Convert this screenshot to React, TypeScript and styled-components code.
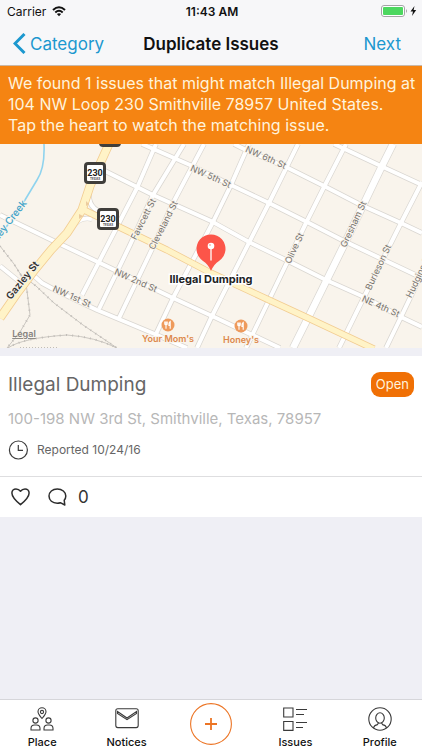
import React from "react";
import styled, { createGlobalStyle } from "styled-components";

const GlobalStyle = createGlobalStyle`
  * { box-sizing: border-box; }
  body { margin: 0; background: #efeff5; font-family: Inter, "Liberation Sans", sans-serif; color: #111; }
  button { font: inherit; border: 0; padding: 0; background: none; color: inherit; cursor: pointer; }
  h1, h2, p { margin: 0; }
  svg { display: block; }
`;

const Screen = styled.div`
  min-height: 100vh;
  display: flex;
  flex-direction: column;
`;

const Header = styled.header`
  background: #f7f7f9;
  border-bottom: 1px solid #c9b8a8;
`;

const StatusBar = styled.div`
  display: grid;
  grid-template-columns: 1fr auto 1fr;
  align-items: center;
  height: 22px;
  padding: 0 5px 0 7px;
  font-size: 12px;
`;

const StatusGroup = styled.div<{ $end?: boolean }>`
  display: flex;
  align-items: center;
  gap: 6px;
  justify-content: ${(p) => (p.$end ? "flex-end" : "flex-start")};
`;

const Clock = styled.span`
  font-size: 12px;
  font-weight: 600;
`;

const NavBar = styled.nav`
  display: grid;
  grid-template-columns: 1fr auto 1fr;
  align-items: center;
  height: 43px;
  padding: 0 13px;
`;

const Title = styled.h1`
  font-size: 17px;
  font-weight: 600;
  line-height: 24px;
`;

const NavLink = styled.a<{ $end?: boolean }>`
  display: flex;
  align-items: center;
  gap: 4px;
  justify-self: ${(p) => (p.$end ? "end" : "start")};
  padding-right: ${(p) => (p.$end ? 8 : 0)}px;
  color: #1c98cf;
  font-size: 17px;
  line-height: 24px;
  text-decoration: none;
`;

const Banner = styled.p`
  padding: 7px 0 8px 8px;
  background: #f58412;
  color: #fff3dc;
  font-size: 16px;
  line-height: 21px;
`;

const MapArea = styled.div`
  height: 204px;
  background: #f9f4ec;
  svg { width: 100%; height: 100%; }
`;

const Card = styled.article`
  margin-top: 8px;
  background: #fff;
`;

const CardBody = styled.div`
  padding: 16px 8px;
  border-bottom: 1px solid #dedee0;
`;

const CardHeading = styled.div`
  display: flex;
  align-items: center;
  justify-content: space-between;
`;

const IssueTitle = styled.h2`
  font-size: 19px;
  font-weight: 400;
  line-height: 25px;
  color: #666;
`;

const Badge = styled.span`
  padding: 0 5px;
  border-radius: 9px;
  background: #f07005;
  color: #fff3dc;
  font-size: 13px;
  line-height: 25px;
`;

const Address = styled.p`
  margin-top: 12px;
  font-size: 15px;
  line-height: 20px;
  color: #b7b7b7;
`;

const Reported = styled.p`
  display: flex;
  align-items: center;
  gap: 9px;
  margin-top: 11px;
  font-size: 12px;
  line-height: 20px;
  color: #666;
`;

const Actions = styled.div`
  display: flex;
  align-items: center;
  height: 40px;
  padding: 0 11px;
  gap: 18px;
`;

const Action = styled.button`
  display: flex;
  align-items: center;
  gap: 11px;
  font-size: 17px;
  color: #333;
`;

const TabBar = styled.nav`
  display: grid;
  grid-template-columns: repeat(5, 1fr);
  margin-top: auto;
  height: 51px;
  background: #fff;
  border-top: 1px solid #d6d6da;
`;

const Tab = styled.button`
  display: flex;
  flex-direction: column;
  align-items: center;
  justify-content: flex-end;
  gap: 4px;
  padding-bottom: 1px;
  font-size: 11px;
  font-weight: 500;
  line-height: 14px;
`;

const AddTab = styled.button`
  display: flex;
  align-items: flex-start;
  justify-content: center;
  padding-top: 3px;
`;

const roads = [
  "M234 0L246 6L288 24L326 43L361 61L401 79L422 89",
  "M142 0L190 21L231 41L269 59L307 78L344 97L422 134",
  "M105 27L153 51L211 77L249 98L288 117L326 136L364 153L401 173L422 183",
  "M0 71L60 100L100 119L173 154L212 172L280 204",
  "M0 122L21 139M33 131L42 139L55 146L97 166L157 191L187 204",
  "M334 0L383 23L422 41",
  "M156 0L137 44L103 110L82 151",
  "M184 0L153 51L130 101L99 165",
  "M204 0L173 59L153 103L119 174",
  "M249 0L231 41L213 78L173 154L156 190",
  "M298 0L269 59L211 174L197 204",
  "M346 0L324 43L306 79L269 156L246 204",
  "M422 38L401 79L364 153L339 204",
  "M422 129L401 173L386 204",
  "M90 40Q85 63 101 68M72 84Q79 72 92 75",
];
const avenue = "M393 0L381 24L344 101L308 174L293 204";
const highway = "M109 0L90 42L82 66L67 89L51 106L33 128L18 148L0 174";
const thirdStreet = "M82 65L117 82L167 106L211 129L269 156L308 174L374 205";
const rails = [
  "M0 102L14 120L26 139L30 171L20 188L7 204",
  "M20 130L36 142L54 159L83 181L117 204",
  "M8 204Q22 194 67 191Q95 193 117 204",
];

type Label = [string, number, number, number];
const streetLabels: Label[] = [
  ["NW 6th St", 266, 13, 24],
  ["NW 5th St", 211, 32, 24],
  ["Fawcett St", 143, 75, -63],
  ["Cleveland St", 163, 81, -63],
  ["Olive St", 294, 104, -65],
  ["Gresham St", 353, 80, -65],
  ["Burleson St", 378, 123, -65],
  ["Hudgins St", 418, 132, -65],
  ["NW 1st St", 72, 152, 24],
  ["NW 2nd St", 136, 136, 24],
  ["NE 4th St", 381, 162, 24],
];

const Shield = ({ x, y, route }: { x: number; y: number; route?: string }) => (
  <g transform={`translate(${x} ${y})`}>
    <rect x="-9.5" y="-9.5" width="19" height="19" rx="2.5" fill="#fff" stroke="#403e3b" strokeWidth="3" />
    {route && (
      <>
        <text y="2.5" textAnchor="middle" fontSize="9" fontWeight="700" fontFamily="Roboto, sans-serif" fill="#222">{route}</text>
        <text y="7" textAnchor="middle" fontSize="3" fontWeight="700" fill="#444">TEXAS</text>
      </>
    )}
  </g>
);

const Restaurant = ({ x, y, name }: { x: number; y: number; name: string }) => (
  <g transform={`translate(${x} ${y})`}>
    <circle r="6.5" fill="#ee9a5c" />
    <path d="M-3.2-3.5v2.3q0 1.2 1.2 1.2t1.2-1.2v-2.3M-2-3.5v7.2M2.2 3.7v-7.2Q.6-2.4.9.4h1.3" fill="none" stroke="#fff" strokeWidth="1.1" />
    <text y="17" textAnchor="middle" fontSize="9" fontWeight="600" fill="#dd884b" stroke="#f9f4ec" strokeWidth="2" paintOrder="stroke">{name}</text>
  </g>
);

const StreetMap = () => (
  <svg viewBox="0 0 422 204" preserveAspectRatio="xMidYMid slice" role="img" aria-label="Map of Smithville">
    <g fill="none" strokeLinejoin="round">
      {rails.map((d) => <path key={d} d={d} stroke="#cbc7c1" strokeWidth="1" />)}
      {rails.map((d) => <path key={d + "ties"} d={d} stroke="#c1bdb8" strokeWidth="2" strokeDasharray="1 5" />)}
      <path d="M20 203.5H57" stroke="#c1bdb8" strokeDasharray="1 2" />
      <path d="M44 0Q45 24 37 36L25 56L0 92" stroke="#8fd3ee" strokeWidth="1.6" />
      {roads.map((d) => <path key={d} d={d} stroke="#d9d6d1" strokeWidth="5.4" />)}
      <path d={avenue} stroke="#d9d6d1" strokeWidth="8" />
      {roads.map((d) => <path key={d + "fill"} d={d} stroke="#fff" strokeWidth="4" />)}
      <path d={avenue} stroke="#fff" strokeWidth="6.6" />
      <path d={thirdStreet} stroke="#f2cc91" strokeWidth="7" />
      <path d={highway} stroke="#f2cc91" strokeWidth="9" />
      <path d={thirdStreet} stroke="#fff3c7" strokeWidth="5.4" />
      <path d={highway} stroke="#fff3c7" strokeWidth="7.4" />
      <path d="M86 57v5l3-2zM79 70v5l4-3z" fill="#eccb9e" />
    </g>
    <g fontSize="9" fill="#77736f" stroke="#f9f4ec" strokeWidth="2" paintOrder="stroke" textAnchor="middle" dominantBaseline="central">
      {streetLabels.map(([text, x, y, angle]) => (
        <text key={text} transform={`translate(${x} ${y}) rotate(${angle})`}>{text}</text>
      ))}
      <text transform="translate(24 57) rotate(-52)" textAnchor="end" fontSize="10" fontWeight="500" fill="#3fa3c9">Gazley Creek</text>
      <text transform="translate(22 136) rotate(-51)" fontSize="10" fontWeight="600" fill="#333">Gazley St</text>
    </g>
    <Shield x={110} y={-8} />
    <Shield x={95} y={29} route="230" />
    <Shield x={108} y={75} route="230" />
    <Restaurant x={168} y={181} name="Your Mom's" />
    <Restaurant x={241} y={182} name="Honey's" />
    <text x="24" y="193" textAnchor="middle" fontSize="9" fontWeight="600" fill="#85827e" textDecoration="underline">Legal</text>
    <path d="M211 127Q208 120 203 117A14.5 14.5 0 1 1 219 117Q214 120 211 127Z" fill="#fc5549" />
    <path d="M211 103V116" stroke="#fff" strokeWidth="1.3" strokeLinecap="round" />
    <circle cx="211" cy="102" r="3.3" fill="#fff" />
    <circle cx="210" cy="101" r="1" fill="#fcb5ae" />
    <text x="211" y="139" textAnchor="middle" fontSize="11" fontWeight="700" fill="#222" stroke="#fff" strokeWidth="3" paintOrder="stroke">Illegal Dumping</text>
  </svg>
);

const WifiIcon = () => (
  <svg width="14" height="11" viewBox="0 0 14 11" fill="none" stroke="#111" strokeWidth="2">
    <path d="M1 4.1Q7-1.5 13 4.1M3.3 6.5Q7 3.1 10.7 6.5" />
    <path d="M4.9 8.1Q7 6.4 9.1 8.1L7 10.3Z" fill="#111" stroke="none" />
  </svg>
);
const BatteryIcon = () => (
  <svg width="36" height="12" viewBox="0 0 36 12">
    <rect x=".5" y=".5" width="23" height="11" rx="2.5" fill="#fff" stroke="#a4a4a6" />
    <rect x="2" y="2" width="20" height="8" rx="1" fill="#4cd75f" />
    <path d="M25 4q2 2 0 4z" fill="#a4a4a6" />
    <path d="M33.5 1L29.5 6.6H32L31 11L35.2 5.1H32.6Z" fill="#111" />
  </svg>
);
const BackIcon = () => (
  <svg width="13" height="21" viewBox="0 0 13 21" fill="none" stroke="#1c98cf" strokeWidth="3">
    <path d="M11.5 1L2 10.5L11.5 20" />
  </svg>
);
const ClockIcon = () => (
  <svg width="20" height="20" viewBox="0 0 20 20" fill="none" stroke="#3c3c3c" strokeWidth="1.2">
    <circle cx="10.4" cy="10" r="9" />
    <path d="M10.3 5V10.3H15" />
  </svg>
);
const HeartIcon = () => (
  <svg width="19" height="18" viewBox="0 0 19 18" fill="none" stroke="#2d2d2d" strokeWidth="1.5" strokeLinejoin="round">
    <path d="M9.5 3.2C8 1.2 6.3.9 5 .9C2.7.9.9 2.7.9 5C.9 9 4.5 12.6 9.5 16.7C14.5 12.6 18.1 9 18.1 5C18.1 2.7 16.3.9 14 .9C12.7.9 11 1.2 9.5 3.2Z" />
  </svg>
);
const CommentIcon = () => (
  <svg width="19" height="18" viewBox="0 0 19 18" fill="none" stroke="#2d2d2d" strokeWidth="1.5" strokeLinejoin="round">
    <path d="M12.3 14.7Q11 15.2 9.2 15.2C4.5 15.2 1 12.3 1 8.1S4.5 1 9.3 1S17.8 4.1 17.8 8Q17.8 10.4 16.2 12.2L16.8 17Z" />
  </svg>
);
const iconProps = { width: 24, height: 24, viewBox: "0 0 24 24", fill: "none", stroke: "#3a3a3a", strokeWidth: 1.1 };
const PlaceIcon = () => (
  <svg {...iconProps}>
    <path d="M12 11.5Q8 7 8 4.8A4 4 0 0 1 16 4.8Q16 7 12 11.5Z" />
    <circle cx="12" cy="5" r="1.6" />
    <circle cx="5.5" cy="13.5" r="2.6" />
    <circle cx="18.5" cy="13.5" r="2.6" />
    <path d="M1 23V21.5Q1 18 4.5 18H6.5Q10 18 10 21.5V23ZM14 23V21.5Q14 18 17.5 18H19.5Q23 18 23 21.5V23Z" />
  </svg>
);
const MailIcon = () => (
  <svg {...iconProps}>
    <rect x=".8" y="1.8" width="22.4" height="18.8" rx="2" />
    <path d="M2.5 4.5L12 11L21.5 4.5V6.5L12 12.7L2.5 6.5Z" />
  </svg>
);
const ListIcon = () => (
  <svg {...iconProps}>
    <path d="M.7 1H10V10H.7ZM.7 14.5H10V23.4H.7ZM13 2.5H24M13 7.5H21M13 15.5H24M13 20.5H20" />
  </svg>
);
const ProfileIcon = () => (
  <svg {...iconProps}>
    <circle cx="12" cy="12" r="11.2" />
    <ellipse cx="12" cy="11" rx="4.3" ry="5.2" />
    <path d="M5.5 21Q6 18.3 9.5 17.6L10.5 15.8M18.5 21Q18 18.3 14.5 17.6L13.5 15.8" />
  </svg>
);
const AddIcon = () => (
  <svg width="42" height="42" viewBox="0 0 42 42" fill="none" stroke="#ec7424">
    <circle cx="21" cy="21" r="20.4" strokeWidth="1.1" />
    <path d="M21 15V27M15 21H27" strokeWidth="1.8" />
  </svg>
);

export default function App() {
  return (
    <Screen>
      <GlobalStyle />
      <Header>
        <StatusBar>
          <StatusGroup>Carrier<WifiIcon /></StatusGroup>
          <Clock>11:43 AM</Clock>
          <StatusGroup $end><BatteryIcon /></StatusGroup>
        </StatusBar>
        <NavBar>
          <NavLink href="#category"><BackIcon />Category</NavLink>
          <Title>Duplicate Issues</Title>
          <NavLink href="#next" $end>Next</NavLink>
        </NavBar>
      </Header>
      <Banner>
        We found 1 issues that might match Illegal Dumping at 104 NW Loop 230 Smithville 78957 United States.
        <br />
        Tap the heart to watch the matching issue.
      </Banner>
      <MapArea><StreetMap /></MapArea>
      <Card>
        <CardBody>
          <CardHeading>
            <IssueTitle>Illegal Dumping</IssueTitle>
            <Badge>Open</Badge>
          </CardHeading>
          <Address>100-198 NW 3rd St, Smithville, Texas, 78957</Address>
          <Reported><ClockIcon />Reported 10/24/16</Reported>
        </CardBody>
        <Actions>
          <Action aria-label="Watch issue"><HeartIcon /></Action>
          <Action aria-label="0 comments"><CommentIcon />0</Action>
        </Actions>
      </Card>
      <TabBar>
        <Tab><PlaceIcon />Place</Tab>
        <Tab><MailIcon />Notices</Tab>
        <AddTab aria-label="Add issue"><AddIcon /></AddTab>
        <Tab><ListIcon />Issues</Tab>
        <Tab><ProfileIcon />Profile</Tab>
      </TabBar>
    </Screen>
  );
}
